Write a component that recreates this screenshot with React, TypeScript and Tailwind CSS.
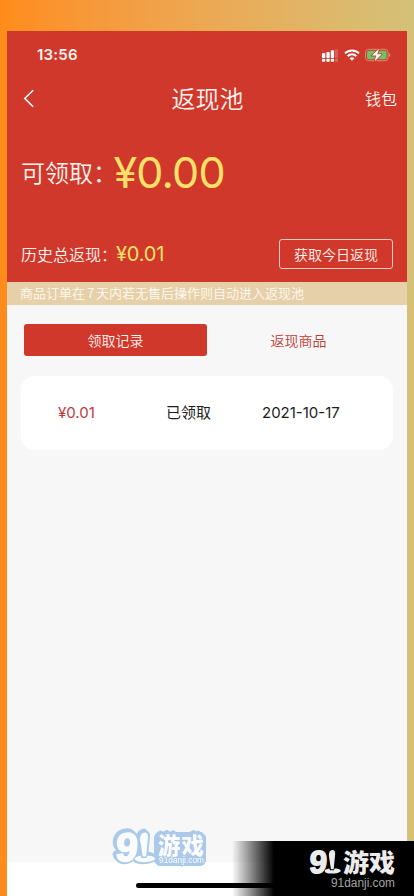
import { ReactNode } from "react";

const SignalIcon = () => (
  <svg width="17" height="13" viewBox="0 0 17 13" fill="#fff">
    <rect x="0" y="4" width="3.3" height="5" rx="0.8" />
    <rect x="4.4" y="3" width="3.3" height="6" rx="0.8" />
    <rect x="8.8" y="1.2" width="3.3" height="7.8" rx="0.8" />
    <rect x="0" y="9.8" width="3.3" height="3" rx="0.8" />
    <rect x="4.4" y="9.8" width="3.3" height="3" rx="0.8" />
    <rect x="8.8" y="9.8" width="3.3" height="3" rx="0.8" />
    <rect x="13" y="0.3" width="3" height="8.7" rx="0.8" opacity="0.2" />
    <rect x="13" y="9.8" width="3" height="3" rx="0.8" opacity="0.25" />
  </svg>
);

const WifiIcon = () => (
  <svg width="16" height="12" viewBox="0 0 16 12" fill="none" stroke="#fff" strokeWidth="2">
    <path d="M1 4.4C5 .5 11 .5 15 4.4" />
    <path d="M3.6 7.2c2.6-2.5 6.2-2.5 8.8 0" />
    <path d="M5.6 9.2c1.4-1.3 3.4-1.3 4.8 0L8 11.7z" fill="#fff" stroke="none" />
  </svg>
);

const BatteryIcon = () => (
  <svg width="26" height="14" viewBox="0 0 26 14">
    <rect x="0.5" y="1.3" width="22.6" height="11.4" rx="3.2" fill="none" stroke="#e08a74" />
    <rect x="2" y="2.8" width="19.6" height="8.4" rx="1.8" fill="#68c764" />
    <path d="M24.2 5c1.4.6 1.4 3.4 0 4z" fill="#e69a86" />
    <path
      d="M14 .8 6.8 7.6h4.4L9.6 13.2l7.2-7h-4.5z"
      fill="#fff"
      stroke="#d0382b"
      strokeWidth="1.6"
      paintOrder="stroke"
      strokeLinejoin="round"
    />
  </svg>
);

const BackIcon = () => (
  <svg width="12" height="19" viewBox="0 0 12 19" fill="none" stroke="#fff" strokeWidth="1.5">
    <path d="M10.2 1.2 1.7 9.4l8.5 8.3" />
  </svg>
);

// the 9 with the little standing figure beside it
const LogoMark = ({ color }: { color: string }) => (
  <g fill={color}>
    <text
      x="3"
      y="29"
      fontSize="40"
      fontWeight="700"
      textLength="22"
      lengthAdjust="spacingAndGlyphs"
      stroke={color}
      strokeWidth="1.8"
      strokeLinejoin="round"
      transform="skewX(-4)"
      className="font-['Liberation_Sans',sans-serif]"
    >
      9
    </text>
    <path d="M28.7 1.2c2.8-1.6 5.6.2 5.3 4L32.1 24.6h-3.4L26.1 8c-.3-3 .7-5.8 2.6-6.8z" />
    <path d="M26.8 23.8c-5.6.8-7.2 3-4.8 4.8 4 2.4 14.8 1.9 18.4-.9 2-2.1-1.6-3.9-7.2-4l-.8 2.2h-5z" />
  </g>
);

const Watermark = () => (
  <svg
    width="104"
    height="46"
    viewBox="-6 -6 104 46"
    className="font-['Liberation_Sans','Noto_Sans_CJK_SC',sans-serif] [filter:drop-shadow(1.5px_1.5px_#abc9e8)_drop-shadow(-1.5px_-1.5px_#abc9e8)_drop-shadow(1.5px_-1.5px_#abc9e8)_drop-shadow(-1.5px_1.5px_#abc9e8)]"
  >
    <rect x="44" y="4" width="46" height="28" rx="2" fill="#abc9e8" />
    <LogoMark color="#fafcff" />
    <g fill="#fafcff">
      <text x="44" y="21.5" fontSize="22.5" fontWeight="900" textLength="46">
        游戏
      </text>
      <text x="45" y="31.3" fontSize="9" textLength="45" lengthAdjust="spacingAndGlyphs">
        91danji.com
      </text>
    </g>
  </svg>
);

const CornerLogo = () => (
  <svg
    width="94"
    height="44"
    viewBox="0 0 94 44"
    fill="#ececec"
    className="overflow-visible font-['Liberation_Sans','Noto_Sans_CJK_SC',sans-serif]"
  >
    <g transform="translate(-1 -1.5) scale(.8)">
      <LogoMark color="#ececec" />
    </g>
    <text x="34" y="20.5" fontSize="24.5" fontWeight="900" textLength="52" lengthAdjust="spacingAndGlyphs">
      游戏
    </text>
    <text x="22" y="36" fontSize="12" fill="#a3a3a3" textLength="64" lengthAdjust="spacingAndGlyphs">
      91danji.com
    </text>
  </svg>
);

const Price = ({ className, children }: { className: string; children: ReactNode }) => (
  <span className={`font-['Inter',sans-serif] font-normal ${className}`}>{children}</span>
);

const Header = () => (
  <header className="h-[251px] bg-[#d0382b] text-[#fff3ef]">
    <div className="flex h-12 items-center justify-between pr-4 pl-[30px]">
      <span className="font-['Inter',sans-serif] text-[15px] font-semibold tracking-[0.2px]">
        13:56
      </span>
      <div className="flex items-center">
        <SignalIcon />
        <span className="ml-[5px]">
          <WifiIcon />
        </span>
        <span className="ml-[5px]">
          <BatteryIcon />
        </span>
      </div>
    </div>
    <nav className="grid h-[38px] grid-cols-3 items-center pr-[10px] pl-4">
      <BackIcon />
      <h1 className="pr-[5px] text-center text-2xl leading-[38px]">返现池</h1>
      <span className="text-right text-base">钱包</span>
    </nav>
    <div className="mt-7 flex h-[54px] items-center pl-[14px]">
      <span className="w-[92.5px] pb-px text-2xl whitespace-nowrap">可领取：</span>
      <Price className="text-[43px] leading-none tracking-[-0.8px] text-[#ffe168]">¥0.00</Price>
    </div>
    <div className="mt-10 flex h-[30px] items-center justify-between pr-[14px] pl-[14px]">
      <div className="flex items-center">
        <span className="w-[95px] text-base whitespace-nowrap">历史总返现：</span>
        <Price className="text-xl tracking-[-0.2px] text-[#ffe168]">¥0.01</Price>
      </div>
      <button className="h-[30px] w-[114px] rounded-[3px] border border-[#f6c9c0] pb-px text-sm">
        获取今日返现
      </button>
    </div>
  </header>
);

const App = () => {
  return (
    <div className="relative h-[896px] w-[414px] overflow-hidden bg-linear-to-r from-[#ff8c1a] to-[#d4c178] pt-[31px] pr-[7px] pl-[7px] font-['Noto_Sans_CJK_SC',sans-serif] font-[350]">
      <div className="flex h-full flex-col bg-[#f7f7f7]">
        <Header />
        <p className="h-[23px] bg-[#e6d0aa] pl-[13px] text-[13px] leading-[22px] whitespace-nowrap text-[#fffaf0]">
          商品订单在<span className="inline-block w-[11px] text-center">7</span>
          天内若无售后操作则自动进入返现池
        </p>
        <div className="mt-[19px] flex h-8 pl-[17px] text-sm">
          <button className="w-[183px] rounded-[3px] bg-[#d0382b] text-[#fff3ef]">领取记录</button>
          <button className="w-[183px] text-[#bd3b35]">返现商品</button>
        </div>
        <div className="mx-[14px] mt-5 flex h-[74px] items-center rounded-[14px] bg-white text-[15px] text-[#1c1c1c]">
          <Price className="w-[145px] pl-[37px] text-[15px] text-[#c2393b]">¥0.01</Price>
          <span className="w-[96px] pb-px font-normal">已领取</span>
          <Price className="">2021-10-17</Price>
        </div>
        <footer className="mt-auto flex h-[34px] justify-center bg-white pt-[21px]">
          <div className="h-[5px] w-[142px] rounded-full bg-black" />
        </footer>
      </div>
      <div className="absolute top-[826px] left-[108px]">
        <Watermark />
      </div>
      <div className="absolute right-0 bottom-0 flex h-[55px] w-[182px] bg-linear-to-r from-transparent to-black to-[42px] pt-[10px] pl-[77px]">
        <CornerLogo />
      </div>
    </div>
  );
};

export default App;
